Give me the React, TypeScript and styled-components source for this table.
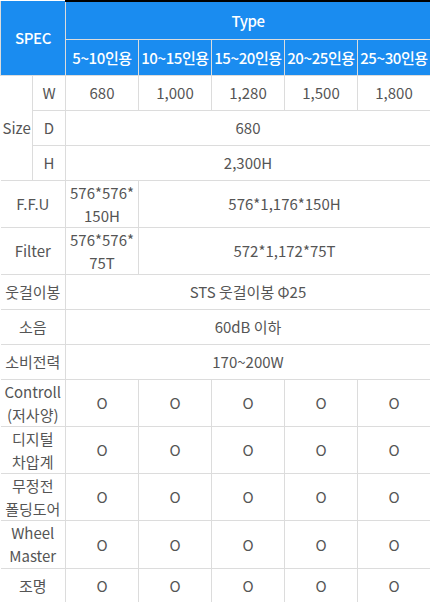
import { createGlobalStyle, styled } from 'styled-components';

const colors = {
  blue: '#1a8cf0',
  line: '#dcdcdc',
  text: '#555555',
};

const GlobalStyle = createGlobalStyle`
  html, body {
    margin: 0;
    padding: 0;
    background: #ffffff;
  }
  body {
    font-family: "Noto Sans CJK KR", "Noto Sans", sans-serif;
  }
`;

const Table = styled.table`
  width: 430px;
  border-collapse: collapse;
  table-layout: fixed;
  color: ${colors.text};
  font-size: 15px;
  line-height: 23px;
  text-align: center;
`;

const Row = styled.tr<{ $height: number }>`
  height: ${(props) => props.$height}px;
`;

const HeadCell = styled.th<{ $topLine?: boolean }>`
  background-color: ${colors.blue};
  color: #ffffff;
  font-weight: 500;
  font-size: 15px;
  padding: 0;
  border: 1px solid ${colors.line};
  border-top: ${(props) => (props.$topLine ? '2px solid #000' : 'none')};
  white-space: nowrap;
  letter-spacing: -0.4px;
`;

const Cell = styled.td`
  padding: 0 2px;
  border: 1px solid ${colors.line};
  vertical-align: middle;
  font-weight: 400;
  white-space: nowrap;
`;

const LabelCell = styled(Cell)`
  border-left: none;
`;

const sizes = ['5~10인용', '10~15인용', '15~20인용', '20~25인용', '25~30인용'];

const options = [
  { label: ['Controll', '(저사양)'], height: 47 },
  { label: ['디지털', '차압계'], height: 47 },
  { label: ['무정전', '폴딩도어'], height: 47 },
  { label: ['Wheel', 'Master'], height: 48 },
  { label: ['조명'], height: 35 },
];

const Lines = ({ lines }: { lines: string[] }) => (
  <>
    {lines.map((line, i) => (
      <span key={line}>
        {i > 0 && <br />}
        {line}
      </span>
    ))}
  </>
);

const App = () => {
  return (
    <>
      <GlobalStyle />
      <Table>
        <colgroup>
          <col style={{ width: 32 }} />
          <col style={{ width: 33 }} />
          <col style={{ width: 73 }} />
          <col style={{ width: 73 }} />
          <col style={{ width: 73 }} />
          <col style={{ width: 73 }} />
          <col style={{ width: 73 }} />
        </colgroup>
        <thead>
          <Row $height={38}>
            <HeadCell colSpan={2} rowSpan={2}>
              SPEC
            </HeadCell>
            <HeadCell colSpan={5} $topLine>
              Type
            </HeadCell>
          </Row>
          <Row $height={36}>
            {sizes.map((s) => (
              <HeadCell key={s}>{s}</HeadCell>
            ))}
          </Row>
        </thead>
        <tbody>
          <Row $height={35}>
            <LabelCell rowSpan={3}>Size</LabelCell>
            <Cell>W</Cell>
            <Cell>680</Cell>
            <Cell>1,000</Cell>
            <Cell>1,280</Cell>
            <Cell>1,500</Cell>
            <Cell>1,800</Cell>
          </Row>
          <Row $height={35}>
            <Cell>D</Cell>
            <Cell colSpan={5}>680</Cell>
          </Row>
          <Row $height={35}>
            <Cell>H</Cell>
            <Cell colSpan={5}>2,300H</Cell>
          </Row>
          <Row $height={47}>
            <LabelCell colSpan={2}>F.F.U</LabelCell>
            <Cell>
              <Lines lines={['576*576*', '150H']} />
            </Cell>
            <Cell colSpan={4}>576*1,176*150H</Cell>
          </Row>
          <Row $height={46}>
            <LabelCell colSpan={2}>Filter</LabelCell>
            <Cell>
              <Lines lines={['576*576*', '75T']} />
            </Cell>
            <Cell colSpan={4}>572*1,172*75T</Cell>
          </Row>
          <Row $height={35}>
            <LabelCell colSpan={2}>웃걸이봉</LabelCell>
            <Cell colSpan={5}>STS 웃걸이봉 Φ25</Cell>
          </Row>
          <Row $height={35}>
            <LabelCell colSpan={2}>소음</LabelCell>
            <Cell colSpan={5}>60dB 이하</Cell>
          </Row>
          <Row $height={35}>
            <LabelCell colSpan={2}>소비전력</LabelCell>
            <Cell colSpan={5}>170~200W</Cell>
          </Row>
          {options.map((opt) => (
            <Row $height={opt.height} key={opt.label.join('')}>
              <LabelCell colSpan={2}>
                <Lines lines={opt.label} />
              </LabelCell>
              {sizes.map((s) => (
                <Cell key={s}>O</Cell>
              ))}
            </Row>
          ))}
        </tbody>
      </Table>
    </>
  );
};

export default App;
